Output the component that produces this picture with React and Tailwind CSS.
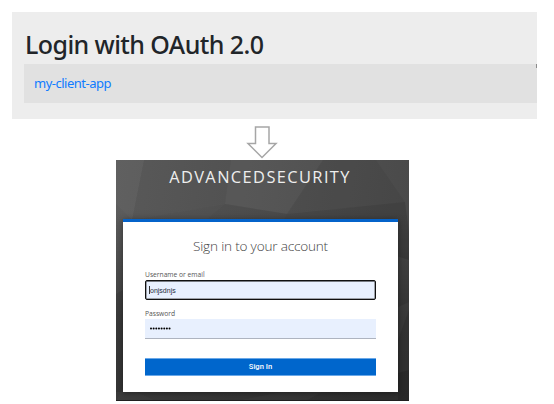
function ClientList() {
  return (
    <section className="ml-3 h-[107px] w-[525px] bg-[#ededed] pl-3 pt-[14px] font-['Noto_Sans',sans-serif]">
      <h1 className="h-[38px] whitespace-nowrap pl-px text-[25px] font-medium leading-[37px] tracking-[-0.58px] text-[#212529]">
        Login with OAuth 2.0
      </h1>
      <div className="flex h-[39px] justify-between bg-[#e1e1e1] pl-[10px]">
        <a className="whitespace-nowrap text-[13px] leading-[39px] tracking-[-0.5px] text-[#0f7bff]">my-client-app</a>
        <span className="h-1 w-px bg-[#8c8c8c]" />
      </div>
    </section>
  );
}

function DownArrow() {
  return (
    <svg className="ml-[246px] mt-[6px] block" width="32" height="35" viewBox="0 0 32 35" fill="none">
      <path d="M9.5 2H23V18.5H30L16 32.5L2 18.5H9.5Z" stroke="#a6a6a6" strokeWidth="1.5" />
    </svg>
  );
}

function Backdrop() {
  return (
    <svg className="col-start-1 row-start-1 block" width="293" height="241" viewBox="0 0 293 241">
      <defs>
        <linearGradient id="shade" gradientUnits="userSpaceOnUse" x1="0" y1="0" x2="293" y2="40">
          <stop offset="0" stopColor="#5d5d5d" />
          <stop offset="0.5" stopColor="#545454" />
          <stop offset="1" stopColor="#4a4a4a" />
        </linearGradient>
        <linearGradient id="floor" x1="0" y1="0" x2="0" y2="1">
          <stop offset="0.2" stopColor="#000" stopOpacity="0" />
          <stop offset="0.65" stopColor="#000" stopOpacity=".32" />
          <stop offset="1" stopColor="#000" stopOpacity=".38" />
        </linearGradient>
      </defs>
      <rect width="293" height="241" fill="url(#shade)" />
      <rect width="293" height="241" fill="url(#floor)" />
      <path d="M0 0H28L16 60L0 44Z" fill="#fff" fillOpacity=".025" />
      <path d="M28 0H115L109 44L16 60Z" fill="#000" fillOpacity=".035" />
      <path d="M115 0H207L171 54L109 44Z" fill="#fff" fillOpacity=".012" />
      <path d="M207 0H260L289 42L171 54Z" fill="#000" fillOpacity=".05" />
      <path d="M109 44L90 60H168L171 54Z" fill="#000" fillOpacity=".09" />
      <path d="M109 44L90 60H16Z" fill="#000" fillOpacity=".06" />
      <path d="M171 54L289 42L293 72V100L168 60Z" fill="#000" fillOpacity=".12" />
      <path d="M293 142L282 147V180L293 150Z" fill="#fff" fillOpacity=".03" />
      <path d="M293 210L282 213V241H293Z" fill="#000" fillOpacity=".12" />
      <path d="M0 134L7 130V232H0Z" fill="#000" fillOpacity=".08" />
      <path d="M0 241L8 226L40 241ZM120 241L170 231H208L190 241Z" fill="#fff" fillOpacity=".02" />
      <path d="M0 240.5H293" stroke="#202020" />
    </svg>
  );
}

function SignInCard() {
  return (
    <form className="ml-[7px] flex h-[173px] w-[275px] flex-col border-t-[3px] border-[#0463ca] bg-white px-[22px] shadow-[0_1px_6px_rgba(0,0,0,0.4)]">
      <h2 className="mt-[13px] h-[22px] whitespace-nowrap text-center font-['Open_Sans',sans-serif] text-[13.6px] font-light leading-[22px] tracking-[-0.2px] text-[#444444]">
        Sign in to your account
      </h2>
      <label className="mt-[12px] h-[11px] whitespace-nowrap font-['Open_Sans',sans-serif] text-[6.7px] leading-[11px] text-[#555555]">
        Username or email
      </label>
      <div className="flex h-5 items-center rounded-[2px] border border-[#101010] bg-[#e8f0fe] pl-[3px] font-['Liberation_Sans',sans-serif] text-[7px] leading-none text-[#242b3b] shadow-[inset_0_1px_0_#777b83,inset_0_0_0_0.5px_#555]">
        <span className="h-[8px] w-px bg-[#333]" />
        onjsdnjs
      </div>
      <label className="mt-[8px] h-[11px] whitespace-nowrap font-['Open_Sans',sans-serif] text-[6.7px] leading-[11px] text-[#555555]">
        Password
      </label>
      <svg className="block h-[20px] w-[231px] border-b border-[#aeb4c0] bg-[#e8f0fe]" viewBox="0 0 231 19">
        {Array.from({ length: 8 }, (_, i) => (
          <circle key={i} cx={6 + i * 2.65} cy="9.5" r="1" fill="#000" />
        ))}
      </svg>
      <button
        type="button"
        className="mt-[19px] h-[18px] border-y border-[#6aa8e8] bg-[#0066cc] text-center font-['Roboto',sans-serif] text-[7.6px] font-medium leading-[14px] text-white"
      >
        Sign In
      </button>
    </form>
  );
}

export default function App() {
  return (
    <main className="h-[404px] w-[554px] overflow-hidden bg-white pt-3">
      <ClientList />
      <DownArrow />
      <section className="ml-[116px] grid h-[241px] w-[293px] overflow-hidden">
        <Backdrop />
        <div className="relative col-start-1 row-start-1">
          <div className="h-[59px] whitespace-nowrap pr-[5px] pt-[5px] text-center font-['Open_Sans',sans-serif] text-[16.4px] leading-[24px] tracking-[1.4px] text-[#eeeeee]">
            ADVANCEDSECURITY
          </div>
          <SignInCard />
        </div>
      </section>
    </main>
  );
}
